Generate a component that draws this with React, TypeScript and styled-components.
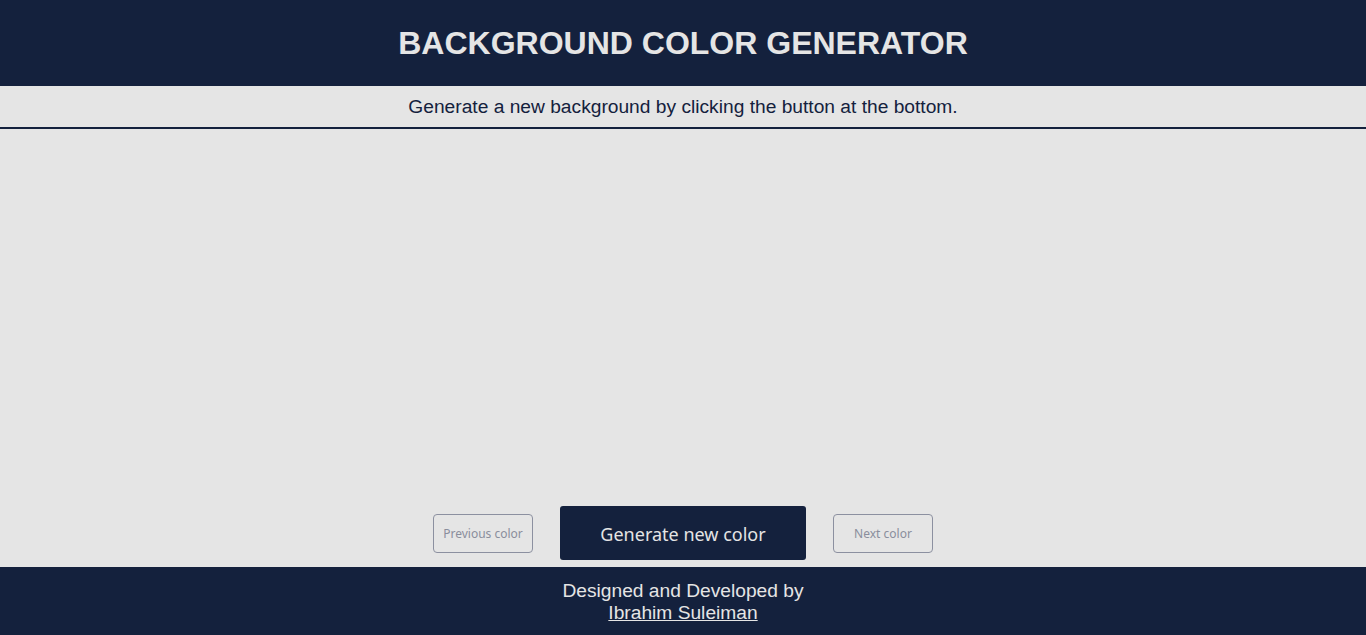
import React from "react";
import styled, { createGlobalStyle } from "styled-components";

const Global = createGlobalStyle`
  html, body { margin: 0; padding: 0; }
  body { background: #e5e5e5; font-family: "Liberation Sans", Arial, sans-serif; }
  * { box-sizing: border-box; }
`;

const Page = styled.div`
  display: flex;
  flex-direction: column;
  min-height: 100vh;
  background: #e5e5e5;
`;

const Header = styled.header`
  height: 86px;
  background: #14213d;
  display: flex;
  align-items: center;
  justify-content: center;
`;

const Title = styled.h1`
  margin: 0;
  color: #e5e5e5;
  font-size: 32px;
  font-weight: 700;
  letter-spacing: 0;
`;

const Subtitle = styled.p`
  margin: 0;
  height: 43px;
  border-bottom: 2px solid #14213d;
  display: flex;
  align-items: center;
  justify-content: center;
  color: #14213d;
  font-size: 19.2px;
`;

const Main = styled.main`
  flex: 1;
  display: flex;
  align-items: flex-end;
  justify-content: center;
  padding-bottom: 7px;
`;

const Controls = styled.div`
  display: flex;
  align-items: center;
  gap: 27px;
`;

const SideButton = styled.button`
  width: 100px;
  height: 39px;
  background: transparent;
  border: 1px solid #8c90a0;
  border-radius: 4px;
  color: #8a8e9c;
  font-family: "Noto Sans", "Open Sans", sans-serif;
  font-size: 12px;
  padding: 0;
`;

const MainButton = styled.button`
  width: 246px;
  height: 54px;
  background: #14213d;
  border: none;
  border-radius: 3px;
  color: #e5e5e5;
  font-family: "Noto Sans", "Open Sans", sans-serif;
  font-size: 18px;
  padding: 0;
  padding-top: 2px;
`;

const Footer = styled.footer`
  height: 68px;
  background: #14213d;
  color: #e5e5e5;
  display: flex;
  flex-direction: column;
  align-items: center;
  justify-content: center;
  font-size: 19.2px;
  line-height: 22px;
  padding-top: 2px;
`;

const Author = styled.a`
  color: #e5e5e5;
  text-decoration: underline;
`;

export default function App() {
  return (
    <>
      <Global />
      <Page>
        <Header>
          <Title>BACKGROUND COLOR GENERATOR</Title>
        </Header>
        <Subtitle>Generate a new background by clicking the button at the bottom.</Subtitle>
        <Main>
          <Controls>
            <SideButton>Previous color</SideButton>
            <MainButton>Generate new color</MainButton>
            <SideButton>Next color</SideButton>
          </Controls>
        </Main>
        <Footer>
          <span>Designed and Developed by</span>
          <Author href="#">Ibrahim Suleiman</Author>
        </Footer>
      </Page>
    </>
  );
}
